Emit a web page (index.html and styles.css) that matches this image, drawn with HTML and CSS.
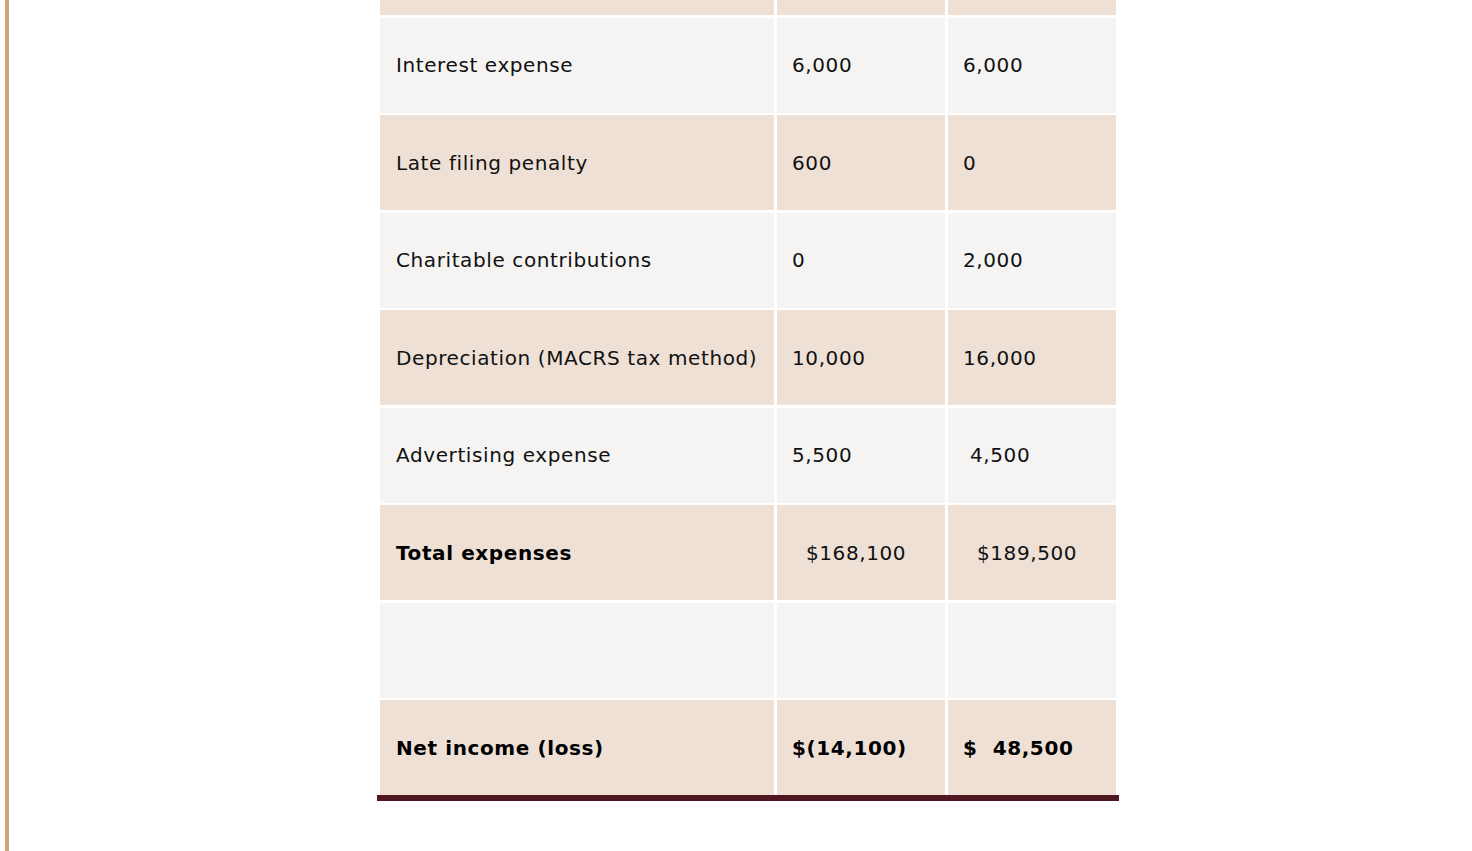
FILE: index.html
```html
<!DOCTYPE html>
<html lang="en">
<head>
<meta charset="utf-8">
<title>Income statement</title>
<link rel="stylesheet" href="styles.css">
</head>
<body>
<div class="page">
  <div class="statement">
    <div class="cell tan stub"></div><div class="cell tan stub"></div><div class="cell tan stub"></div>

    <div class="cell light">Interest expense</div><div class="cell light">6,000</div><div class="cell light">6,000</div>
    <div class="cell tan">Late filing penalty</div><div class="cell tan">600</div><div class="cell tan">0</div>
    <div class="cell light">Charitable contributions</div><div class="cell light">0</div><div class="cell light">2,000</div>
    <div class="cell tan">Depreciation (MACRS tax method)</div><div class="cell tan">10,000</div><div class="cell tan">16,000</div>
    <div class="cell light">Advertising expense</div><div class="cell light">5,500</div><div class="cell light pre"> 4,500</div>
    <div class="cell tan bold">Total expenses</div><div class="cell tan pre">  $168,100</div><div class="cell tan pre">  $189,500</div>
    <div class="cell light empty"></div><div class="cell light empty"></div><div class="cell light empty"></div>
    <div class="cell tan bold">Net income (loss)</div><div class="cell tan bold">$(14,100)</div><div class="cell tan bold pre">$  48,500</div>
  </div>
</div>
</body>
</html>
```

FILE: styles.css
```css
html, body {
  margin: 0;
  padding: 0;
  background: #ffffff;
}

.page {
  margin-left: 5px;
  border-left: 4px solid #d4a57c;
  min-height: 100vh;
  box-sizing: border-box;
}

.statement {
  display: grid;
  grid-template-columns: 394px 168px 168px;
  column-gap: 3px;
  row-gap: 2.5px;
  width: 742px;
  box-sizing: border-box;
  padding: 0 3px;
  margin-left: 368px;
  border-bottom: 6px solid #4f1820;
  font-family: "DejaVu Sans", Verdana, sans-serif;
  font-size: 20px;
  letter-spacing: 0.6px;
  color: #111111;
}

.cell {
  height: 95px;
  display: flex;
  align-items: center;
  padding: 0 15px 0 16px;
  box-sizing: border-box;
  white-space: nowrap;
}

.statement .cell:nth-child(3n+2),
.statement .cell:nth-child(3n) {
  padding-left: 15px;
}

.cell.stub {
  height: 15px;
}

.tan {
  background: #efe0d6;
}

.light {
  background: #f5f4f2;
}

.bold {
  font-weight: bold;
  color: #000000;
}

.pre {
  white-space: pre;
}
```
